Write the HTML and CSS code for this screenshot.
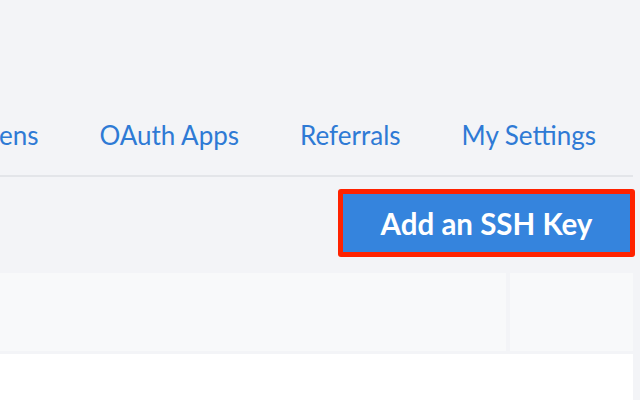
FILE: index.html
```html
<!DOCTYPE html>
<html>
<head>
<meta charset="utf-8">
<link rel="stylesheet" href="styles.css">
</head>
<body>
<div class="page">
  <nav class="tabs">
    <a class="tab">Access Tokens</a>
    <a class="tab">OAuth Apps</a>
    <a class="tab">Referrals</a>
    <a class="tab">My Settings</a>
  </nav>
  <div class="actions">
    <span class="highlight"><button class="btn">Add an SSH Key</button></span>
  </div>
  <div class="table-head">
    <div class="cell main"></div>
    <div class="cell side"></div>
  </div>
  <div class="table-body"></div>
</div>
</body>
</html>
```
FILE: styles.css
```css
html, body {
  margin: 0;
  padding: 0;
  background: #f3f4f7;
  font-family: Lato, "Noto Sans", sans-serif;
  overflow: hidden;
}
.page {
  width: 633px;
  height: 400px;
  display: flex;
  flex-direction: column;
}
.tabs {
  height: 177px;
  display: flex;
  justify-content: flex-end;
  align-items: flex-start;
  gap: 61px;
  padding-right: 37px;
  border-bottom: 2px solid #e3e5e9;
  box-sizing: border-box;
  overflow: hidden;
  white-space: nowrap;
}
.tab {
  color: #2e7ad5;
  font-size: 26px;
  margin-top: 119px;
  flex-shrink: 0;
}
.actions {
  display: flex;
  justify-content: flex-end;
  padding-top: 12px;
  height: 96px;
  box-sizing: border-box;
}
.highlight {
  display: block;
  border: 5px solid #ff2200;
  border-radius: 3px;
  margin-right: -2px;
  height: 58px;
}
.btn {
  display: block;
  width: 287px;
  height: 58px;
  border: 0;
  margin: 0;
  background: #3584dd;
  color: #fff;
  font-family: Lato, "Noto Sans", sans-serif;
  font-weight: bold;
  font-size: 29.5px;
  padding: 0;
}
.table-head {
  display: flex;
  gap: 4px;
  height: 78px;
}
.cell {
  background: #f8f9fa;
}
.main { flex: 1; }
.side { width: 123px; }
.table-body {
  margin-top: 3px;
  background: #fff;
  flex: 1;
}
```
